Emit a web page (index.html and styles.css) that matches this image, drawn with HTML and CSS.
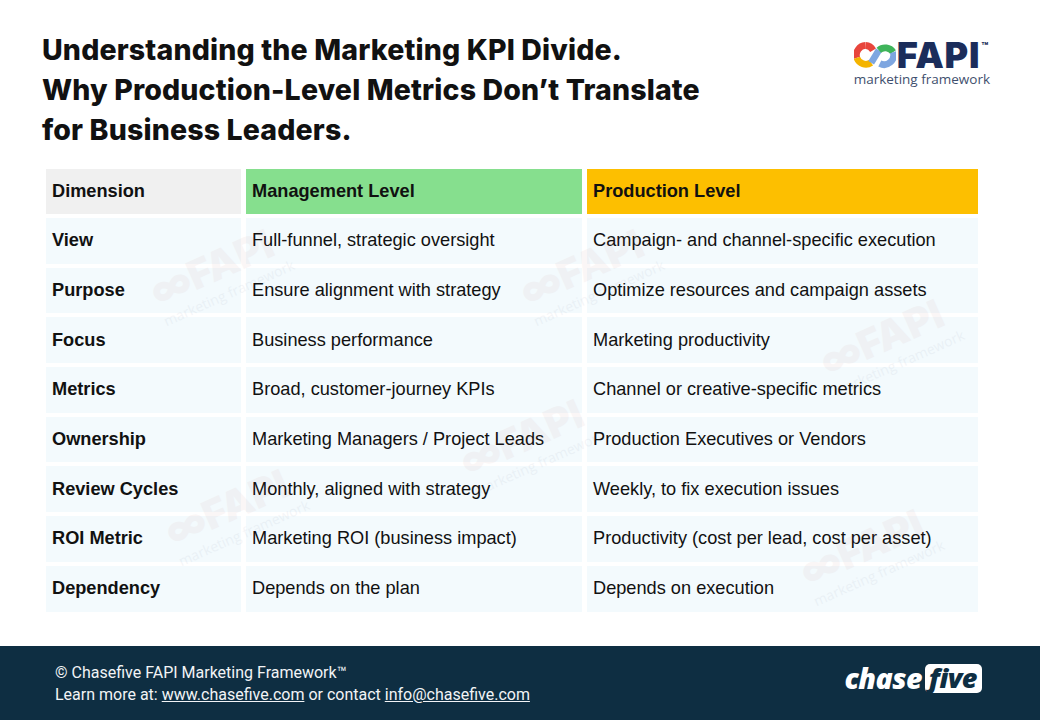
FILE: index.html
```html
<!DOCTYPE html>
<html lang="en">
<head>
<meta charset="utf-8">
<title>Marketing KPI Divide</title>
<link rel="stylesheet" href="styles.css">
</head>
<body>
<div class="page">
  <header class="top">
    <h1 class="title">Understanding the Marketing KPI Divide.<br>Why Production-Level Metrics Don’t Translate<br>for Business Leaders.</h1>
    <div class="fapi">
      <div class="fapi-row">
        <svg class="loop" viewBox="0 0 44 28" width="42" height="28">
          <path d="M12 4 A10 10 0 0 0 3 17" fill="none" stroke="#e8453c" stroke-width="7"/>
          <path d="M3 17 A10 10 0 0 0 18 22" fill="none" stroke="#f4b400" stroke-width="7"/>
          <path d="M18 22 L26 9" fill="none" stroke="#7ea6e0" stroke-width="7"/>
          <path d="M26 9 A10 10 0 0 1 41 11" fill="none" stroke="#3fb45a" stroke-width="7"/>
          <path d="M41 11 A10 10 0 0 1 27 23" fill="none" stroke="#7ea6e0" stroke-width="7"/>
          <path d="M12 4 A10 10 0 0 1 20 9" fill="none" stroke="#e8453c" stroke-width="7"/>
        </svg>
        <span class="fapi-word">FAPI</span><span class="tm">™</span>
      </div>
      <div class="fapi-sub">marketing framework</div>
    </div>
  </header>

  <div class="table-wrap">
    <table class="kpi">
      <thead>
        <tr>
          <th class="h-dim">Dimension</th>
          <th class="h-mgmt">Management Level</th>
          <th class="h-prod">Production Level</th>
        </tr>
      </thead>
      <tbody>
        <tr><th>View</th><td>Full-funnel, strategic oversight</td><td>Campaign- and channel-specific execution</td></tr>
        <tr><th>Purpose</th><td>Ensure alignment with strategy</td><td>Optimize resources and campaign assets</td></tr>
        <tr><th>Focus</th><td>Business performance</td><td>Marketing productivity</td></tr>
        <tr><th>Metrics</th><td>Broad, customer-journey KPIs</td><td>Channel or creative-specific metrics</td></tr>
        <tr><th>Ownership</th><td>Marketing Managers / Project Leads</td><td>Production Executives or Vendors</td></tr>
        <tr><th>Review Cycles</th><td>Monthly, aligned with strategy</td><td>Weekly, to fix execution issues</td></tr>
        <tr><th>ROI Metric</th><td>Marketing ROI (business impact)</td><td>Productivity (cost per lead, cost per asset)</td></tr>
        <tr><th>Dependency</th><td>Depends on the plan</td><td>Depends on execution</td></tr>
      </tbody>
    </table>
    <div class="wm wm1"><span class="wm-logo">∞FAPI</span><span class="wm-sub">marketing framework</span></div>
    <div class="wm wm2"><span class="wm-logo">∞FAPI</span><span class="wm-sub">marketing framework</span></div>
    <div class="wm wm3"><span class="wm-logo">∞FAPI</span><span class="wm-sub">marketing framework</span></div>
    <div class="wm wm4"><span class="wm-logo">∞FAPI</span><span class="wm-sub">marketing framework</span></div>
    <div class="wm wm5"><span class="wm-logo">∞FAPI</span><span class="wm-sub">marketing framework</span></div>
    <div class="wm wm6"><span class="wm-logo">∞FAPI</span><span class="wm-sub">marketing framework</span></div>
  </div>

  <footer class="foot">
    <div class="foot-text">
      <div>© Chasefive FAPI Marketing Framework™</div>
      <div>Learn more at: <a href="#">www.chasefive.com</a> or contact <a href="#">info@chasefive.com</a></div>
    </div>
    <div class="chase"><span class="chase-word">chase</span><span class="five">five</span></div>
  </footer>
</div>
</body>
</html>
```

FILE: styles.css
```css
* { box-sizing: border-box; }
html, body { margin: 0; padding: 0; background: #fff; }
.page {
  width: 1040px;
  height: 720px;
  display: flex;
  flex-direction: column;
  font-family: "Liberation Sans", Arial, sans-serif;
  color: #111;
}
.top {
  display: flex;
  justify-content: space-between;
  align-items: flex-start;
  padding: 30px 36px 0 42px;
  height: 165px;
}
.title {
  margin: 0;
  font-family: Inter, "Liberation Sans", sans-serif;
  font-weight: 800;
  font-size: 28.5px;
  line-height: 40px;
  letter-spacing: 0.15px;
  color: #111;
}
.fapi {
  margin-top: 10px;
  margin-right: 14px;
  display: flex;
  flex-direction: column;
  align-items: flex-start;
}
.fapi-row {
  display: flex;
  align-items: center;
  height: 30px;
}
.loop { display: block; margin-right: 1px; }
.fapi-word {
  font-family: Inter, sans-serif;
  font-weight: 900;
  font-size: 36px;
  line-height: 30px;
  color: #1b2d5b;
  letter-spacing: 0.8px;
}
.tm {
  font-family: Inter, sans-serif;
  font-weight: 800;
  font-size: 11px;
  line-height: 12px;
  color: #1b2d5b;
  align-self: flex-start;
  margin-left: 1px;
}
.fapi-sub {
  font-family: "Open Sans", sans-serif;
  font-size: 13.5px;
  color: #3f4f6e;
  line-height: 18px;
}
.table-wrap {
  position: relative;
  padding: 0 58px 0 42px;
  flex: 1;
}
.kpi {
  border-collapse: separate;
  border-spacing: 5px 4px;
  margin-left: -1px;
  width: 942px;
  font-size: 18.2px;
}
.kpi th, .kpi td {
  height: 45.7px;
  padding: 0 6px;
  text-align: left;
  vertical-align: middle;
  background: #f3fafd;
}
.kpi thead th { font-weight: 700; height: 45px; }
.kpi tbody th { font-weight: 700; width: 195px; }
.kpi td:nth-child(2) { width: 336px; }
.h-dim { background: #f0f0f0 !important; }
.h-mgmt { background: #86df8e !important; }
.h-prod { background: #fdbf00 !important; }

.wm {
  position: absolute;
  display: flex;
  flex-direction: column;
  align-items: flex-start;
  transform: rotate(-24deg);
  opacity: 0.045;
  pointer-events: none;
  color: #1b2d5b;
}
.wm-logo {
  font-family: Inter, sans-serif;
  font-weight: 900;
  font-size: 40px;
  line-height: 40px;
  color: #a04040;
}
.wm-sub { font-family: "Open Sans", sans-serif; font-size: 14px; }
.wm1 { left: 150px; top: 80px; }
.wm2 { left: 520px; top: 80px; }
.wm3 { left: 820px; top: 150px; }
.wm4 { left: 460px; top: 250px; }
.wm5 { left: 165px; top: 320px; }
.wm6 { left: 800px; top: 360px; }

.foot {
  height: 74px;
  background: #0e2e42;
  color: #f2f4f6;
  display: flex;
  align-items: center;
  justify-content: space-between;
  padding: 0 58px 0 55px;
  font-family: Roboto, sans-serif;
  font-size: 16px;
  line-height: 22px;
}
.foot-text { padding-top: 2px; }
.foot a { color: #f2f4f6; text-decoration: underline; }
.chase {
  display: flex;
  align-items: center;
  margin-top: -10px;
}
.chase-word {
  font-family: "Open Sans", sans-serif;
  font-weight: 800;
  font-style: italic;
  font-size: 28.5px;
  color: #fff;
  letter-spacing: -0.6px;
}
.five {
  margin-left: 3px;
  background: #fff;
  color: #0e2e42;
  border-radius: 5px;
  font-family: "Open Sans", sans-serif;
  font-weight: 800;
  font-style: italic;
  font-size: 27px;
  line-height: 28px;
  padding: 0 5px 1px 4px;
  letter-spacing: -0.5px;
}
```
